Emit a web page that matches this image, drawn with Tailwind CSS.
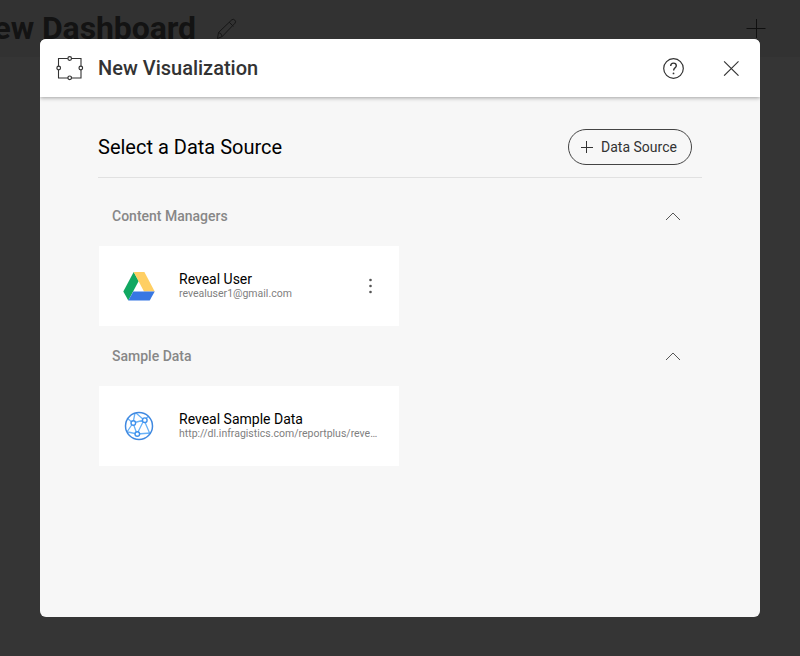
<!DOCTYPE html>
<html lang="en">
<head>
<meta charset="utf-8">
<title>New Visualization</title>
<script src="https://cdn.jsdelivr.net/npm/@tailwindcss/browser@4"></script>
</head>
<body class="relative h-[656px] w-[800px] overflow-hidden bg-[#353535] font-['Roboto',sans-serif]">
<header class="flex h-[57px] items-center justify-between bg-[#323232] pr-[34px]">
  <div class="flex items-center gap-[21px]">
    <h1 class="-ml-[29px] text-[32px] font-bold leading-[57px] tracking-[-0.1px] whitespace-nowrap text-[#131313]"><span class="inline-block w-[224px]">New Dashboard</span></h1>
    <svg class="size-[22px]" viewBox="0 0 22 22" fill="none" stroke="#161616" stroke-width="1"><path d="M1.5 20.5l1-6L15.800 1.800q1.500-1.200 3 .3t.2 3.100L6.200 18.500zM13.200 4.200l4.200 4.200M2.500 14.500q3 .5 3.700 4"/></svg>
  </div>
  <svg class="size-5" viewBox="0 0 20 20" stroke="#101010" stroke-width="1"><path d="M.5 9.500h19M10.500 0v19"/></svg>
</header>

<main class="absolute left-[40px] top-[39px] flex h-[578px] w-[720px] flex-col overflow-hidden rounded-[6px] bg-[#f7f7f7]">
  <div class="relative z-10 flex h-[58px] shrink-0 items-center bg-white pl-4 shadow-[0_1px_4px_rgba(0,0,0,0.35)]">
    <svg class="h-[26px] w-[28px]" viewBox="0 0 28 26" fill="#fff" stroke="#333"><path d="M2.500 3.500h22.500v19.500h-22.500z" stroke-width="1.100"/><g stroke-width="1.200"><circle cx="13.700" cy="3.500" r="1.800"/><circle cx="13.700" cy="22.800" r="1.800"/><circle cx="2.700" cy="13" r="1.800"/><circle cx="24.800" cy="13" r="1.800"/></g></svg>
    <h2 class="ml-[14px] text-[20px] font-medium leading-[58px] text-[#333]">New Visualization</h2>
    <div class="ml-auto flex items-center gap-[39px] pr-[21px]">
      <svg class="size-[21px]" viewBox="0 0 21 21" fill="none" stroke="#333" stroke-width="1.200"><circle cx="10.500" cy="10.500" r="9.800"/><path d="M7.700 8.100q0-3 2.800-3t2.800 2.700c0 2-2.700 2.200-2.700 4.800" stroke-width="1.400"/><circle cx="10.500" cy="15.400" r=".9" fill="#333" stroke="none"/></svg>
      <svg class="size-4" viewBox="0 0 16 16" stroke="#333" stroke-width="1.100"><path d="M1.100 1.300l14.400 14.400M15.500 1.300L1.100 15.700"/></svg>
    </div>
  </div>

  <div class="mr-[58px] ml-[58px] flex h-[81px] shrink-0 items-center justify-between border-b border-[#e1e1e1] pt-[20px] pr-[10px]">
    <h3 class="text-[20px] leading-6 text-black">Select a Data Source</h3>
    <button class="flex h-[36px] w-[124px] items-center rounded-full border border-[#444] pl-3 text-[14px] text-[#333]">
      <svg class="mr-[8px] size-[12px]" viewBox="0 0 12 12" stroke="#333" stroke-width="1"><path d="M0 6.500h12M5.500 0v12"/></svg>
      <span class="w-[76px] whitespace-nowrap">Data Source</span>
    </button>
  </div>

  <section class="ml-[59px] mr-[79px]">
    <div class="flex h-[68px] items-center justify-between pt-[9px] pl-[13px]">
      <h4 class="text-[14px] font-medium text-[#878787]">Content Managers</h4>
      <svg class="h-[9px] w-4" viewBox="0 0 16 9" fill="none" stroke="#555"><path d="M1 8l7-7 7 7"/></svg>
    </div>
    <article class="flex h-[80px] w-[300px] items-center bg-white pl-6 pr-[26px]">
      <svg class="mt-px h-[29px] w-[32px]" viewBox="0 0 32 29"><path fill="#11a861" d="M10.700 0L15.700 9 5.300 28.500.3 19.500z"/><path fill="#ffcf63" d="M10.700 0h10.700l10.300 19.500H21z"/><path fill="#3777e3" d="M10.300 19.500h21.400l-5 9H5.300z"/></svg>
      <div class="ml-6 flex-1 pb-[2px]">
        <div class="text-[14px] leading-4 text-black">Reveal User</div>
        <div class="text-[10.500px] leading-[13px] text-[#808080]">revealuser1@gmail.com</div>
      </div>
      <svg class="h-4 w-[5px]" viewBox="0 0 5 16" fill="#555"><circle cx="2.500" cy="2" r="1.300"/><circle cx="2.500" cy="8" r="1.300"/><circle cx="2.500" cy="14" r="1.300"/></svg>
    </article>
  </section>

  <section class="ml-[59px] mr-[79px]">
    <div class="flex h-[60px] items-center justify-between pl-[13px]">
      <h4 class="text-[14px] font-medium text-[#878787]">Sample Data</h4>
      <svg class="h-[9px] w-4" viewBox="0 0 16 9" fill="none" stroke="#555"><path d="M1 8l7-7 7 7"/></svg>
    </div>
    <article class="flex h-[80px] w-[300px] items-center bg-white pl-[25px] pr-[20px]">
      <svg class="size-[30px]" viewBox="0 0 30 30" fill="none"><g stroke="#69b2f8" stroke-width="1.300"><path d="M9 12L3 7M9 12L11 2M9 12l-6 9M9 12l11-3M9 12l4 11M20 9L12 2M20 9l5-4M20 9l6 14M20 9l-7 14M13 23l14-1M13 23l-9-2"/></g><circle cx="15" cy="15" r="13.500" stroke="#4089e0" stroke-width="1.500"/><g fill="#fff" stroke="#3f91ec" stroke-width="1.400"><circle cx="9.300" cy="12" r="2.300"/><circle cx="20.800" cy="9.200" r="2.300"/><circle cx="13.300" cy="23" r="2.300"/></g></svg>
      <div class="ml-[25px] min-w-0 flex-1 pb-[2px]">
        <div class="text-[14px] leading-4 text-black">Reveal Sample Data</div>
        <div class="whitespace-nowrap text-[10.500px] leading-[13px] text-[#808080]">http://dl.infragistics.com/reportplus/reve…</div>
      </div>
    </article>
  </section>
</main>
</body>
</html>
